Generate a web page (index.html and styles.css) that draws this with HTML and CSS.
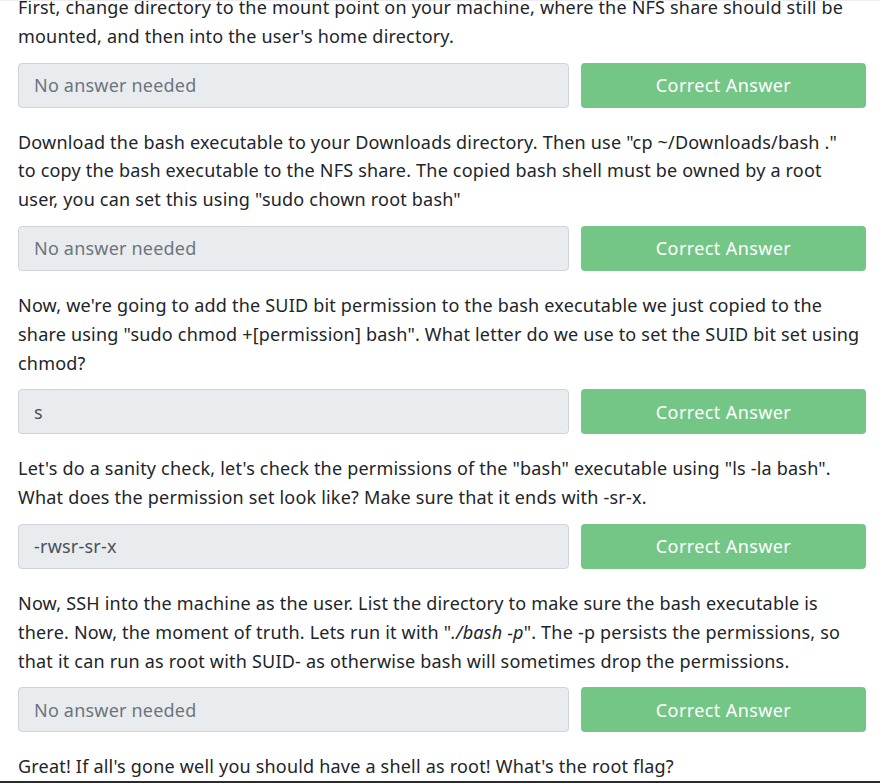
FILE: index.html
```html
<!DOCTYPE html>
<html lang="en">
<head>
<meta charset="utf-8">
<title>Task</title>
<link rel="stylesheet" href="styles.css">
</head>
<body>
<div class="edge-top"></div>
<div class="qa">
  <section class="question">
    <p class="prompt">First, change directory to the mount point on your machine, where the NFS share should still be<br>mounted, and then into the user's home directory.</p>
    <div class="row">
      <div class="answer placeholder">No answer needed</div>
      <button class="submit">Correct Answer</button>
    </div>
  </section>
  <section class="question">
    <p class="prompt">Download the bash executable to your Downloads directory. Then use "cp ~/Downloads/bash ."<br>to copy the bash executable to the NFS share. The copied bash shell must be owned by a root<br>user, you can set this using "sudo chown root bash"</p>
    <div class="row">
      <div class="answer placeholder">No answer needed</div>
      <button class="submit">Correct Answer</button>
    </div>
  </section>
  <section class="question">
    <p class="prompt">Now, we're going to add the SUID bit permission to the bash executable we just copied to the<br>share using "sudo chmod +[permission] bash". What letter do we use to set the SUID bit set using<br>chmod?</p>
    <div class="row">
      <div class="answer">s</div>
      <button class="submit">Correct Answer</button>
    </div>
  </section>
  <section class="question">
    <p class="prompt">Let's do a sanity check, let's check the permissions of the "bash" executable using "ls -la bash".<br>What does the permission set look like? Make sure that it ends with -sr-x.</p>
    <div class="row">
      <div class="answer">-rwsr-sr-x</div>
      <button class="submit">Correct Answer</button>
    </div>
  </section>
  <section class="question">
    <p class="prompt">Now, SSH into the machine as the user. List the directory to make sure the bash executable is<br>there. Now, the moment of truth. Lets run it with "<em>./bash -p</em>". The -p persists the permissions, so<br>that it can run as root with SUID- as otherwise bash will sometimes drop the permissions.</p>
    <div class="row">
      <div class="answer placeholder">No answer needed</div>
      <button class="submit">Correct Answer</button>
    </div>
  </section>
  <section class="question">
    <p class="prompt">Great! If all's gone well you should have a shell as root! What's the root flag?</p>
  </section>
</div>
<div class="edge"></div>
</body>
</html>
```

FILE: styles.css
```css
html, body {
  margin: 0;
  padding: 0;
  background: #ffffff;
  overflow: hidden;
}
body {
  font-family: "Noto Sans", "Open Sans", sans-serif;
  font-size: 18px;
  letter-spacing: 0.2px;
  color: #212529;
}
.qa {
  margin-top: -7px;
  padding: 0 14px 0 18px;
}
.question {
  margin-bottom: 20px;
}
.prompt {
  margin: 0 0 12px 0;
  line-height: 28.8px;
}
.row {
  display: flex;
  gap: 12px;
}
.answer {
  flex: 1;
  height: 45px;
  box-sizing: border-box;
  padding: 0 15px;
  display: flex;
  align-items: center;
  background: #e9ecef;
  border: 1px solid #ced4da;
  border-radius: 4px;
  color: #495057;
  font-size: 18px;
}
.answer.placeholder {
  color: #6c757d;
}
.submit {
  width: 285px;
  height: 45px;
  border: none;
  border-radius: 4px;
  background: #74c687;
  color: #ffffff;
  font-family: inherit;
  font-size: 18px;
  letter-spacing: 0.4px;
}
.edge-top {
  position: fixed;
  left: 0;
  right: 0;
  top: 0;
  height: 1px;
  background: #ececec;
  z-index: 1;
}
.edge {
  position: fixed;
  left: 0;
  right: 0;
  bottom: 0;
  height: 2px;
  background: #2b2b2b;
}
```
